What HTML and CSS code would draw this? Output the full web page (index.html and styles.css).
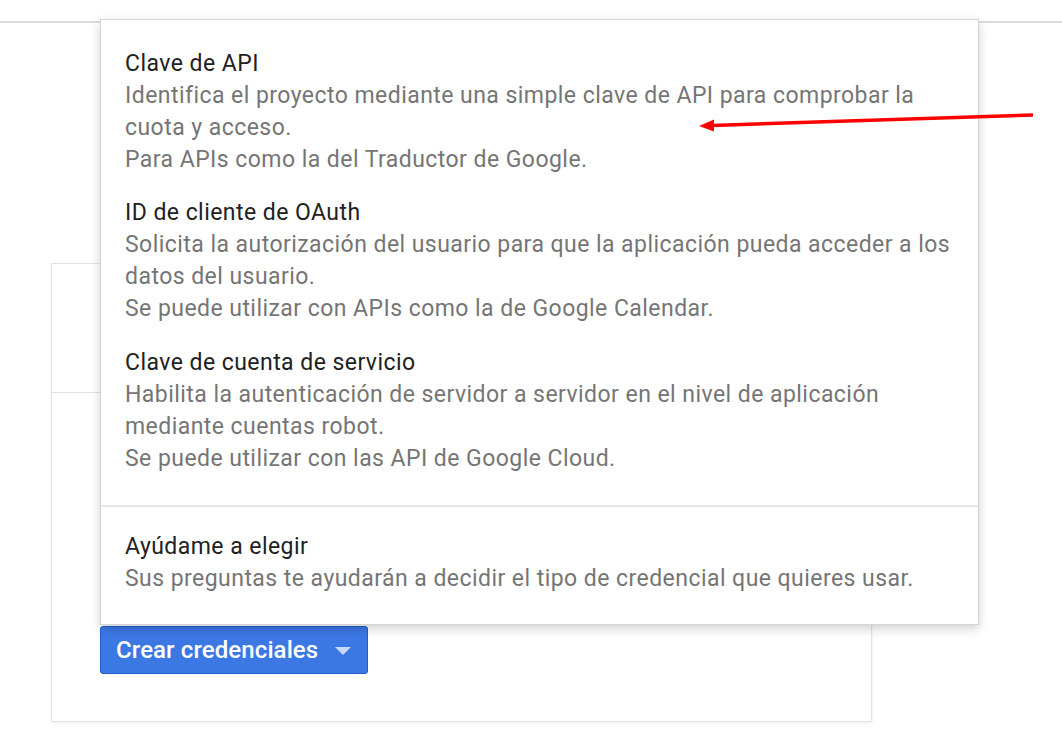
FILE: index.html
```html
<!DOCTYPE html>
<html lang="es">
<head>
<meta charset="utf-8">
<title>Crear credenciales</title>
<link rel="stylesheet" href="styles.css">
</head>
<body>
<div class="header"></div>
<div class="card">
  <div class="card-top"></div>
  <div class="card-body">
    <button class="btn" type="button">Crear credenciales <span class="caret"></span></button>
  </div>
</div>

<div class="menu">
  <div class="section">
    <div class="item">
      <div class="title">Clave de API</div>
      <div class="desc">Identifica el proyecto mediante una simple clave de API para comprobar la cuota y acceso.</div>
      <div class="desc">Para APIs como la del Traductor de Google.</div>
    </div>
    <div class="item">
      <div class="title">ID de cliente de OAuth</div>
      <div class="desc">Solicita la autorización del usuario para que la aplicación pueda acceder a los datos del usuario.</div>
      <div class="desc">Se puede utilizar con APIs como la de Google Calendar.</div>
    </div>
    <div class="item">
      <div class="title">Clave de cuenta de servicio</div>
      <div class="desc">Habilita la autenticación de servidor a servidor en el nivel de aplicación mediante cuentas robot.</div>
      <div class="desc">Se puede utilizar con las API de Google Cloud.</div>
    </div>
  </div>
  <div class="section">
    <div class="item">
      <div class="title">Ayúdame a elegir</div>
      <div class="desc">Sus preguntas te ayudarán a decidir el tipo de credencial que quieres usar.</div>
    </div>
  </div>
</div>

<svg class="arrow" width="1062" height="200" viewBox="0 0 1062 200">
  <line x1="1033" y1="115" x2="712" y2="125.5" stroke="#f00" stroke-width="3.5"/>
  <polygon points="699,126 714,119.5 714,131.5" fill="#f00"/>
</svg>
</body>
</html>
```
FILE: styles.css
```css
html, body {
  margin: 0;
  padding: 0;
  background: #fff;
  font-family: Roboto, "Liberation Sans", Arial, sans-serif;
}
body {
  position: relative;
  width: 1062px;
  height: 734px;
  overflow: hidden;
}
.header {
  height: 21px;
  border-bottom: 2px solid #dcdcdc;
}
.card {
  margin: 240px 0 0 51px;
  width: 819px;
  height: 457px;
  border: 1px solid #e4e4e4;
  box-shadow: 0 1px 3px rgba(0,0,0,0.08);
  background: #fff;
  display: flex;
  flex-direction: column;
}
.card-top {
  height: 128px;
  border-bottom: 1px solid #e0e0e0;
}
.card-body {
  flex: 1;
  padding: 233px 0 0 48px;
}
.btn {
  width: 268px;
  height: 48px;
  box-sizing: border-box;
  background: #3b78e4;
  border: 1px solid #1f5ccc;
  border-radius: 3px;
  color: #fff;
  font-family: Roboto, "Liberation Sans", Arial, sans-serif;
  font-weight: 500;
  font-size: 24px;
  letter-spacing: 0.1px;
  padding: 0 0 0 15px;
  display: flex;
  align-items: center;
  gap: 17px;
  cursor: pointer;
}
.caret {
  width: 0;
  height: 0;
  border-left: 8px solid transparent;
  border-right: 8px solid transparent;
  border-top: 8px solid #c8d9f8;
  margin-top: 2px;
}
.menu {
  position: absolute;
  top: 19px;
  left: 100px;
  width: 879px;
  box-sizing: border-box;
  background: #fff;
  border: 1px solid #d4d4d4;
  box-shadow: 0 4px 10px rgba(0,0,0,0.18);
}
.section {
  padding: 17px 0 19.5px;
}
.section + .section {
  border-top: 2px solid #e6e6e6;
  padding: 14px 0 18px;
}
.item {
  padding: 10.5px 20px 10.5px 24px;
}
.item + .item {
  padding-top: 11px;
}
.title {
  font-size: 23px;
  line-height: 32px;
  letter-spacing: 0.45px;
  color: #212121;
}
.desc {
  font-size: 23px;
  line-height: 32px;
  letter-spacing: 0.45px;
  color: #757575;
}
.arrow {
  position: absolute;
  top: 0;
  left: 0;
  pointer-events: none;
}
```
